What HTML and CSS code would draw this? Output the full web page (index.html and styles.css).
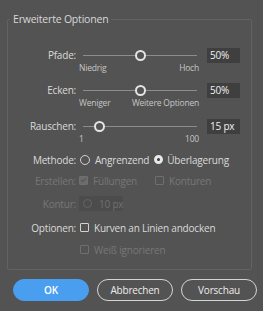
FILE: index.html
```html
<!DOCTYPE html>
<html lang="de">
<head>
    <meta charset="UTF-8">
    <title>Erweiterte Optionen</title>
    <link rel="stylesheet" href="styles.css">
</head>
<body>
    <fieldset class="panel">
        <legend>Erweiterte Optionen</legend>

        <div class="row slider-row first">
            <span class="label">Pfade:</span>
            <div class="slider">
                <div class="track"><span class="thumb" style="left: 50%"></span></div>
                <div class="scale"><span>Niedrig</span><span>Hoch</span></div>
            </div>
            <div class="value">50%</div>
        </div>

        <div class="row slider-row">
            <span class="label">Ecken:</span>
            <div class="slider">
                <div class="track"><span class="thumb" style="left: 50%"></span></div>
                <div class="scale"><span>Weniger</span><span>Weitere Optionen</span></div>
            </div>
            <div class="value">50%</div>
        </div>

        <div class="row slider-row">
            <span class="label">Rauschen:</span>
            <div class="slider">
                <div class="track"><span class="thumb" style="left: 14.1%"></span></div>
                <div class="scale"><span>1</span><span>100</span></div>
            </div>
            <div class="value">15 px</div>
        </div>

        <div class="row method">
            <span class="label">Methode:</span>
            <span class="option"><i class="radio"></i>Angrenzend</span>
            <span class="option"><i class="radio checked"></i>Überlagerung</span>
        </div>

        <div class="row create disabled">
            <span class="label">Erstellen:</span>
            <span class="option"><i class="check checked"></i>Füllungen</span>
            <span class="option"><i class="check"></i>Konturen</span>
        </div>

        <div class="row stroke disabled">
            <span class="label">Kontur:</span>
            <div class="spinner"><i class="spin-icon"></i>10 px</div>
        </div>

        <div class="row snap">
            <span class="label">Optionen:</span>
            <span class="option"><i class="check"></i>Kurven an Linien andocken</span>
        </div>

        <div class="row ignore disabled">
            <span class="label"></span>
            <span class="option"><i class="check"></i>Weiß ignorieren</span>
        </div>
    </fieldset>

    <div class="buttons">
        <button class="btn primary">OK</button>
        <button class="btn">Abbrechen</button>
        <button class="btn">Vorschau</button>
    </div>
</body>
</html>
```

FILE: styles.css
```css
/* Base */
body {
    margin: 0;
    padding: 12px 0 0 7px;
    background-color: #535353;
    color: #dadada;
    font-family: 'Open Sans', sans-serif;
    font-size: 10px;
    letter-spacing: -0.2px;
    overflow: hidden;
}

/* Group box */
.panel {
    width: 245px;
    box-sizing: border-box;
    margin: 0;
    padding: 22px 0 12px 0;
    border: 1px solid #626262;
    border-radius: 2px;
}

.panel legend {
    margin-left: 2px;
    padding: 0 3px;
    color: #d8d8d8;
    font-size: 10.5px;
}

.row {
    display: flex;
    align-items: center;
    height: 15px;
    white-space: nowrap;
}

.label {
    width: 68px;
    margin-right: 3px;
    text-align: right;
    flex-shrink: 0;
}

/* Sliders */
.slider-row {
    align-items: flex-start;
    height: 26px;
    margin-top: 9px;
}

.slider-row.first {
    margin-top: 0;
}

.slider-row + .slider-row + .slider-row {
    margin-top: 10px;
}

.slider-row .label {
    line-height: 15px;
}

.slider {
    width: 122px;
}

.track {
    position: relative;
    margin: 7px 4px 0 4px;
    width: 114px;
    height: 1px;
    background-color: #8c8c8c;
}

.thumb {
    position: absolute;
    top: -5px;
    width: 7px;
    height: 7px;
    margin-left: -5px;
    border: 2px solid #e4e4e4;
    border-radius: 50%;
    background-color: #535353;
}

.scale {
    display: flex;
    justify-content: space-between;
    margin-top: 6px;
    padding-right: 2px;
    color: #c6c6c6;
    font-size: 8.5px;
    line-height: 11px;
}

.value {
    width: 33px;
    height: 15px;
    margin-left: 6px;
    padding-left: 3px;
    box-sizing: border-box;
    background-color: #3f3f3f;
    color: #f0f0f0;
    line-height: 15px;
}

/* Radios and checkboxes */
.option {
    display: flex;
    align-items: center;
}

.option + .option {
    margin-left: 5px;
}

.radio, .check {
    display: inline-block;
    width: 8px;
    height: 8px;
    margin-right: 5px;
    border: 1px solid #d2d2d2;
    flex-shrink: 0;
}

.radio {
    border-radius: 50%;
}

.radio.checked {
    width: 3px;
    height: 3px;
    border: 3px solid #e8e8e8;
    background-color: #3a3a3a;
    margin-right: 4px;
}

.check {
    width: 7px;
    height: 7px;
    border-radius: 1px;
}

.method {
    margin-top: 7px;
}

.method .option {
    margin-left: 1px;
}

.method .option + .option {
    margin-left: 5px;
}

.create {
    margin-top: 6px;
}

.stroke {
    margin-top: 8px;
}

.snap {
    margin-top: 9px;
}

.ignore {
    margin-top: 7px;
}

.snap .option .check,
.ignore .option .check {
    margin-left: 1px;
}

/* Disabled state */
.disabled {
    color: #777;
}

.disabled .check,
.disabled .radio {
    border-color: #6f6f6f;
}

.disabled .check.checked {
    background-color: #6c6c6c;
    position: relative;
}

.disabled .check.checked::after {
    content: "";
    position: absolute;
    left: 2px;
    top: 0;
    width: 2px;
    height: 4px;
    border: solid #555;
    border-width: 0 1px 1px 0;
    transform: rotate(45deg);
}

.create .option:first-of-type .check {
    margin-left: 1px;
    margin-right: 6px;
}

.create .option + .option {
    margin-left: 18px;
}

.spinner {
    display: flex;
    align-items: center;
    width: 44px;
    height: 15px;
    background-color: #4c4c4c;
    color: #707070;
}

.spin-icon {
    width: 7px;
    height: 7px;
    margin: 0 7px 0 4px;
    border: 1px solid #656565;
    border-radius: 50%;
    flex-shrink: 0;
}

/* Buttons */
.buttons {
    display: flex;
    gap: 8px;
    margin: 9px 0 0 6px;
}

.btn {
    width: 76px;
    height: 22px;
    padding: 0;
    border: 1.5px solid #d4d4d4;
    border-radius: 11px;
    background-color: transparent;
    color: #ececec;
    font-family: 'Open Sans', sans-serif;
    font-size: 10px;
    letter-spacing: -0.2px;
}

.btn.primary {
    border-color: #4a9ef0;
    background-color: #4a9ef0;
    color: #fff;
    font-weight: 600;
}
```
